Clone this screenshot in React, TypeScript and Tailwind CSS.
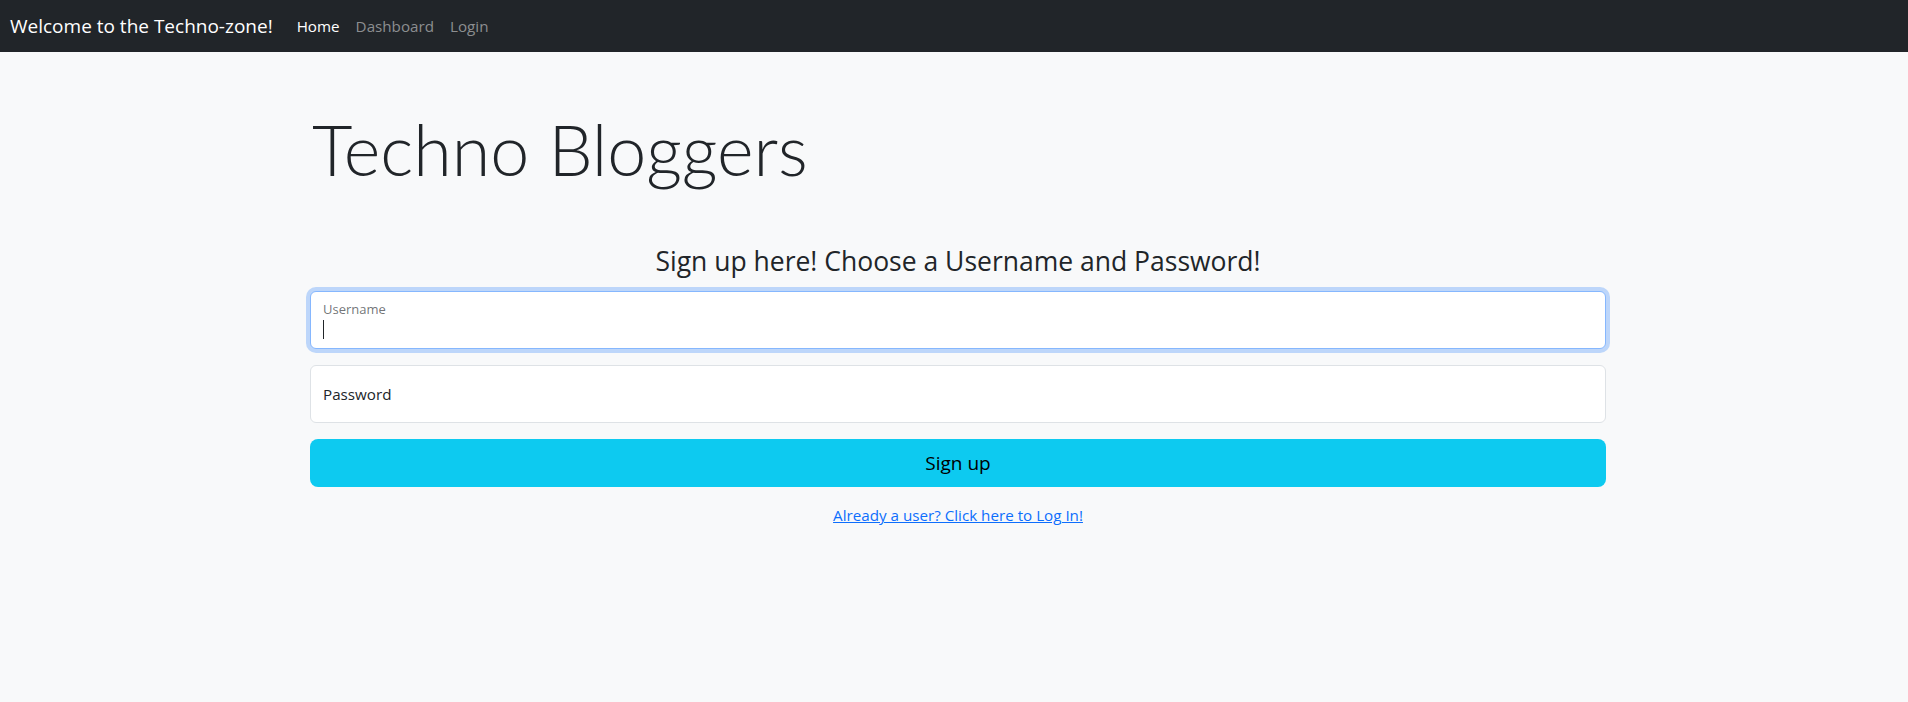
import React from 'react';

const font = "font-['Open_Sans','Noto_Sans',sans-serif]";

function NavBar() {
  return (
    <nav className="h-[52px] bg-[#212529] flex items-center pl-[10px]">
      <span className="text-[19px] text-white mr-[16px] leading-[30px]">Welcome to the Techno-zone!</span>
      <a className="px-[8px] text-[15.2px] text-white">Home</a>
      <a className="px-[8px] text-[15.2px] text-[#8c8e90]">Dashboard</a>
      <a className="px-[8px] text-[15.2px] text-[#8c8e90]">Login</a>
    </nav>
  );
}

export default function App() {
  return (
    <div className={`${font} min-h-[702px] bg-[#f8f9fa] text-[#212529]`}>
      <NavBar />
      <main className="w-[1304px] mx-auto pl-[8px]">
        {/* Heading */}
        <h1 className="font-['Lato',sans-serif] text-[70px] font-light leading-[96px] mt-[49px] ml-[2px]">Techno Bloggers</h1>

        {/* Sign up form */}
        <section className="mt-[47px]">
          <h3 className="text-[26.5px] leading-[34px] text-center mb-[13px]">Sign up here! Choose a Username and Password!</h3>

          <div className="relative h-[58px] bg-white border border-[#86b7fe] rounded-[6px] shadow-[0_0_0_4px_rgba(13,110,253,0.25)]">
            <span className="absolute left-[12px] top-[8px] text-[13px] text-[#212529a6]">Username</span>
            <span className="absolute left-[12px] top-[28px] w-px h-[19px] bg-[#212529]"></span>
          </div>

          <div className="mt-[16px] h-[58px] bg-white border border-[#dee2e6] rounded-[6px] flex items-center px-[12px]">
            <span className="text-[15.2px]">Password</span>
          </div>

          <button className="mt-[16px] w-full h-[48px] bg-[#0dcaf0] rounded-[8px] text-[19px] text-black">Sign up</button>

          <div className="mt-[16px] text-center">
            <a className="text-[15.2px] text-[#0d6efd] underline">Already a user? Click here to Log In!</a>
          </div>
        </section>
      </main>
    </div>
  );
}
